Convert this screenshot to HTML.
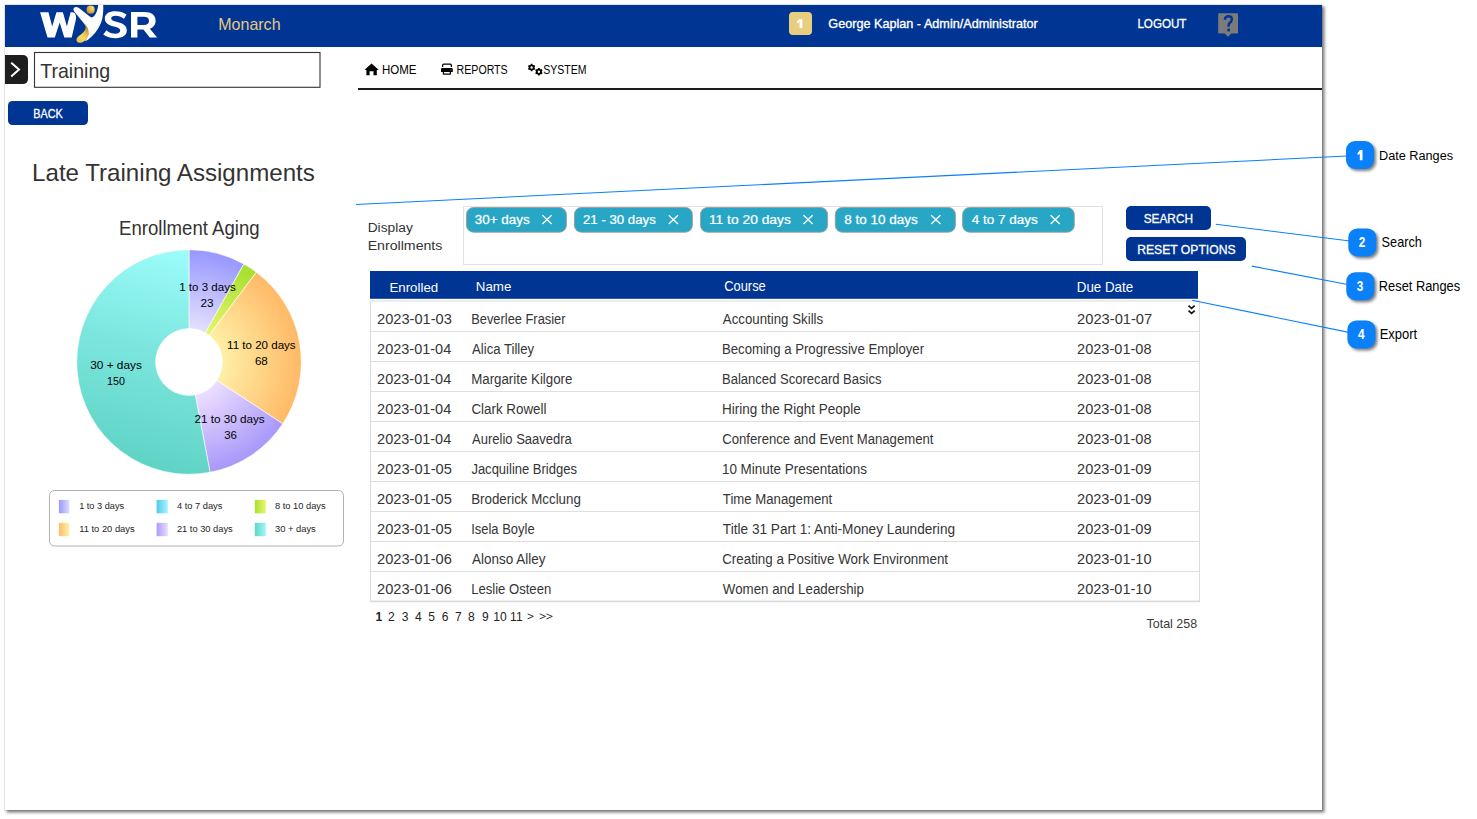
<!DOCTYPE html>
<html><head><meta charset="utf-8">
<style>
html,body{margin:0;padding:0;width:1477px;height:819px;overflow:hidden;background:#fff;}
svg{position:absolute;left:0;top:0;}
text{font-family:"Liberation Sans",sans-serif;}
</style></head><body>
<svg width="1477" height="819" viewBox="0 0 1477 819">
 <defs>
  <filter id="sh" x="-5%" y="-5%" width="110%" height="110%"><feGaussianBlur stdDeviation="1.6"/></filter>
  <filter id="bsh" x="-30%" y="-30%" width="160%" height="160%"><feGaussianBlur stdDeviation="1.4"/></filter>
  <radialGradient id="ga" gradientUnits="userSpaceOnUse" cx="189" cy="362" r="112.3"><stop offset="0.3" stop-color="#e4e0ff"/><stop offset="1" stop-color="#9797ff"/></radialGradient>
  <radialGradient id="gg" gradientUnits="userSpaceOnUse" cx="189" cy="362" r="112.3"><stop offset="0.3" stop-color="#e6f66e"/><stop offset="1" stop-color="#a6de2e"/></radialGradient>
  <radialGradient id="go" gradientUnits="userSpaceOnUse" cx="189" cy="362" r="112.3"><stop offset="0.3" stop-color="#ffefa6"/><stop offset="1" stop-color="#ffb966"/></radialGradient>
  <radialGradient id="gp" gradientUnits="userSpaceOnUse" cx="189" cy="362" r="112.3"><stop offset="0.3" stop-color="#ecdeff"/><stop offset="1" stop-color="#a898fa"/></radialGradient>
  <linearGradient id="gt" gradientUnits="userSpaceOnUse" x1="185" y1="252" x2="130" y2="470"><stop offset="0" stop-color="#9cfcfa"/><stop offset="0.45" stop-color="#7ce6de"/><stop offset="1" stop-color="#5ed2c4"/></linearGradient>
  <linearGradient id="l1" x1="0" y1="0" x2="1" y2="0"><stop offset="0" stop-color="#9b98ff"/><stop offset="1" stop-color="#dcdaff"/></linearGradient>
  <linearGradient id="l2" x1="0" y1="0" x2="1" y2="0"><stop offset="0" stop-color="#52c8e6"/><stop offset="1" stop-color="#a8f4ff"/></linearGradient>
  <linearGradient id="l3" x1="0" y1="0" x2="1" y2="0"><stop offset="0" stop-color="#acde2c"/><stop offset="1" stop-color="#e4f870"/></linearGradient>
  <linearGradient id="l4" x1="0" y1="0" x2="1" y2="0"><stop offset="0" stop-color="#ffbb68"/><stop offset="1" stop-color="#fff2a8"/></linearGradient>
  <linearGradient id="l5" x1="0" y1="0" x2="1" y2="0"><stop offset="0" stop-color="#ab9df9"/><stop offset="1" stop-color="#ebdcff"/></linearGradient>
  <linearGradient id="l6" x1="0" y1="0" x2="1" y2="0"><stop offset="0" stop-color="#5fd6c8"/><stop offset="1" stop-color="#a0f8f4"/></linearGradient>
  <linearGradient id="gold" x1="0.8" y1="0" x2="0.2" y2="1"><stop offset="0" stop-color="#a87018"/><stop offset="0.45" stop-color="#e8c050"/><stop offset="0.7" stop-color="#f2dc6c"/><stop offset="1" stop-color="#f0bc38"/></linearGradient>
  <radialGradient id="head" cx="0.7" cy="0.3" r="0.8"><stop offset="0" stop-color="#f6e27a"/><stop offset="0.6" stop-color="#dcae44"/><stop offset="1" stop-color="#c28a28"/></radialGradient>
 </defs>
 <!-- page shadow -->
 <rect x="6.5" y="6.5" width="1318" height="806" fill="#000" opacity="0.5" filter="url(#sh)"/>
 <rect x="4.5" y="4.5" width="1318" height="806" fill="none" stroke="#000" stroke-opacity="0.06" stroke-width="1"/>
 <rect x="5" y="5" width="1317" height="805" fill="#fff"/>
 <!-- header -->
 <rect x="5" y="5" width="1317" height="42" fill="#003594"/>
 <!-- logo -->
 <g fill="#fff">
  <path d="M40.1 12.3 L48.5 12.3 L52.2 26.5 L56.4 12.3 L62.9 12.3 L66.9 26.5 L70.6 12.3 L72.8 12.3 C75.2 12.6 76.6 15.4 75.9 19.6 L71.7 37.4 L64.3 37.4 L59.7 22.6 L54.8 37.4 L47.5 37.4 Z"/>
  <path d="M98.2 5 C97.6 9.5 96.6 13.5 94.0 16.2 C93.0 17.2 91.8 17.8 90.4 17.1 L78.6 7.8 C77.0 6.6 74.8 6.6 73.9 8.0 C73.2 9.2 73.4 10.4 74.2 11.4 L82.4 21.4 C84.6 23.8 86.6 27.0 87.6 30.6 C88.4 34.0 87.6 38.0 85.0 41.6 C93.0 37.0 99.6 29.0 102.2 19.0 C103.2 14.6 103.4 9.6 103.2 5Z"/>
  <path d="M106.5 30.3 C108.8 32.8 112.4 33.8 115.4 33.8 C118.4 33.8 120.2 32.6 120.2 30.6 C120.2 28.6 118.4 27.8 114.0 26.6 C108.0 25.0 104.8 22.6 104.8 18.4 C104.8 13.8 109.0 11.2 115.4 11.2 C119.8 11.2 123.6 12.4 126.6 14.6 L124.0 18.8 C121.4 16.8 118.4 15.8 115.6 15.8 C112.8 15.8 111.2 16.8 111.2 18.4 C111.2 20.2 113.2 21.0 117.4 22.0 C123.8 23.6 126.8 26.0 126.8 30.6 C126.8 35.4 122.6 38.2 115.8 38.2 C110.6 38.2 106.2 36.8 103.2 34.4Z"/>
  <path d="M131.0 12.0 H144.2 C151.6 12.0 155.6 15.2 155.6 20.8 C155.6 24.8 153.4 27.6 149.8 28.8 L157.2 37.6 H149.8 L143.4 29.6 H137.4 V37.6 H131.0Z M137.4 16.8 V25.0 H143.8 C147.2 25.0 149.0 23.6 149.0 20.9 C149.0 18.2 147.2 16.8 143.8 16.8Z" fill-rule="evenodd"/>
 </g>
 <path d="M83.4 22.6 C86.6 25.2 88.8 29.0 88.8 33.0 C88.8 37.0 86.0 40.6 82.4 42.2 C80.2 43.2 77.8 42.8 76.8 41.2 C75.8 39.6 76.8 37.6 78.8 36.0 C81.4 34.0 84.6 31.6 85.6 28.4 C86.0 26.6 85.0 24.4 83.4 22.6Z" fill="url(#gold)"/>
 <circle cx="90.6" cy="9.7" r="4.1" fill="url(#head)"/>
 <!-- badge 1 -->
 <rect x="789" y="12" width="23" height="23" rx="4" ry="4" fill="#e8cf80"/>
 <!-- help -->
 <path d="M1219.4 13.2 H1236.8 Q1238 13.2 1238 14.4 V32.4 Q1238 33.6 1236.8 33.6 H1231.2 L1228 36.8 L1224.8 33.6 H1219.4 Q1218.2 33.6 1218.2 32.4 V14.4 Q1218.2 13.2 1219.4 13.2Z" fill="#7b7b7b"/>
 <path d="M1224.9 19.8 C1224.9 17.4 1226.4 16.3 1228.4 16.3 C1230.5 16.3 1231.9 17.6 1231.9 19.3 C1231.9 21.0 1230.9 21.9 1229.8 22.8 C1228.9 23.5 1228.6 24.3 1228.6 25.6 V26.8" fill="none" stroke="#003594" stroke-width="2.4"/>
 <rect x="1227.3" y="28.6" width="2.7" height="2.8" fill="#003594"/>
 <!-- nav icons -->
 <path d="M371.6 63.6 L378.6 69.8 L376.8 69.9 V75.2 H373.5 V71.3 H369.6 V75.2 H366.4 V69.9 L364.6 69.8Z" fill="#000"/>
 <path d="M442.6 67.0 V65.4 Q442.6 64.2 443.8 64.2 H450.2 Q451.4 64.2 451.4 65.4 V67.0" fill="none" stroke="#000" stroke-width="1.3"/>
 <path d="M442.2 68.0 H451.6 Q452.8 68.0 452.8 69.2 V71.9 H451.0 V74.0 Q451.0 74.8 450.2 74.8 H443.6 Q442.8 74.8 442.8 74.0 V71.9 H441.0 V69.2 Q441.0 68.0 442.2 68.0Z M444.0 71.9 V73.6 H449.8 V71.9Z" fill="#000" fill-rule="evenodd"/>
 <circle cx="451.0" cy="69.9" r="0.5" fill="#8ab"/>
 <path d="M530.66 64.65 L530.85 63.78 L532.35 63.78 L532.54 64.65 L533.59 65.26 L534.45 64.98 L535.20 66.29 L534.54 66.89 L534.54 68.11 L535.20 68.71 L534.45 70.02 L533.59 69.74 L532.54 70.35 L532.35 71.22 L530.85 71.22 L530.66 70.35 L529.61 69.74 L528.75 70.02 L528.00 68.71 L528.66 68.11 L528.66 66.89 L528.00 66.29 L528.75 64.98 L529.61 65.26Z M530.40 67.50 a1.20 1.20 0 1 0 2.40 0 a1.20 1.20 0 1 0 -2.40 0Z" fill="#000" fill-rule="evenodd"/>
 <path d="M537.92 68.76 L538.13 67.88 L539.67 67.88 L539.88 68.76 L540.96 69.38 L541.82 69.12 L542.60 70.46 L541.94 71.07 L541.94 72.33 L542.60 72.94 L541.82 74.28 L540.96 74.02 L539.88 74.64 L539.67 75.52 L538.13 75.52 L537.92 74.64 L536.84 74.02 L535.98 74.28 L535.20 72.94 L535.86 72.33 L535.86 71.07 L535.20 70.46 L535.98 69.12 L536.84 69.38Z M537.70 71.70 a1.20 1.20 0 1 0 2.40 0 a1.20 1.20 0 1 0 -2.40 0Z" fill="#000" fill-rule="evenodd"/>
 <rect x="358" y="88" width="964" height="2" fill="#1c1c1c"/>
 <!-- left -->
 <path d="M5 55 H22.5 Q28 55 28 60.5 V78.5 Q28 84 22.5 84 H5Z" fill="#1e1e1e"/>
 <path d="M11.2 62.8 L19.0 69.6 L11.2 76.4" fill="none" stroke="#fff" stroke-width="2.0"/>
 <rect x="34.5" y="52.5" width="285.5" height="34.8" fill="none" stroke="#333" stroke-width="1.1"/>
 <rect x="8" y="101" width="80" height="24" rx="4.5" ry="4.5" fill="#003594"/>
 <!-- pie -->
 <g stroke="#fff" stroke-width="0.7" stroke-opacity="0.9">
<path fill="url(#ga)" d="M189.00 249.70 A112.3 112.3 0 0 1 243.89 264.03 L205.32 332.86 A33.4 33.4 0 0 0 189.00 328.60 Z"/>
<path fill="url(#gg)" d="M243.89 264.03 A112.3 112.3 0 0 1 256.41 272.18 L209.05 335.29 A33.4 33.4 0 0 0 205.32 332.86 Z"/>
<path fill="url(#go)" d="M256.41 272.18 A112.3 112.3 0 0 1 282.76 423.81 L216.89 380.38 A33.4 33.4 0 0 0 209.05 335.29 Z"/>
<path fill="url(#gp)" d="M282.76 423.81 A112.3 112.3 0 0 1 210.07 472.31 L195.27 394.81 A33.4 33.4 0 0 0 216.89 380.38 Z"/>
<path fill="url(#gt)" d="M210.07 472.31 A112.3 112.3 0 1 1 189.00 249.70 L189.00 328.60 A33.4 33.4 0 1 0 195.27 394.81 Z"/>
 </g>
 <rect x="49.5" y="490.5" width="294" height="55.5" rx="5" ry="5" fill="none" stroke="#b0b0b0" stroke-width="1"/>
 <rect x="58.9" y="499.9" width="10.4" height="13.4" fill="url(#l1)"/>
 <rect x="156.6" y="499.9" width="11.2" height="13.4" fill="url(#l2)"/>
 <rect x="254.8" y="499.9" width="11" height="13.4" fill="url(#l3)"/>
 <rect x="58.9" y="522.8" width="10.4" height="13.4" fill="url(#l4)"/>
 <rect x="156.6" y="522.8" width="11.2" height="13.4" fill="url(#l5)"/>
 <rect x="254.8" y="522.8" width="11" height="13.4" fill="url(#l6)"/>
 <!-- filters -->
 <rect x="463.5" y="206.5" width="639" height="58" fill="none" stroke="#e2e2e2" stroke-width="1"/>
<rect x="466.5" y="207.5" width="99.9" height="24.7" rx="7" ry="7" fill="#27a6c5" stroke="#a49a98" stroke-width="0.9"/>
<path d="M542.40 215.2 L551.60 224.0 M551.60 215.2 L542.40 224.0" stroke="#fff" stroke-width="1.3"/>
<rect x="574.4" y="207.5" width="118.0" height="24.7" rx="7" ry="7" fill="#27a6c5" stroke="#a49a98" stroke-width="0.9"/>
<path d="M668.80 215.2 L678.00 224.0 M678.00 215.2 L668.80 224.0" stroke="#fff" stroke-width="1.3"/>
<rect x="700.5" y="207.5" width="127.1" height="24.7" rx="7" ry="7" fill="#27a6c5" stroke="#a49a98" stroke-width="0.9"/>
<path d="M803.50 215.2 L812.70 224.0 M812.70 215.2 L803.50 224.0" stroke="#fff" stroke-width="1.3"/>
<rect x="835.3" y="207.5" width="120.1" height="24.7" rx="7" ry="7" fill="#27a6c5" stroke="#a49a98" stroke-width="0.9"/>
<path d="M931.20 215.2 L940.40 224.0 M940.40 215.2 L931.20 224.0" stroke="#fff" stroke-width="1.3"/>
<rect x="962.6" y="207.5" width="111.7" height="24.7" rx="7" ry="7" fill="#27a6c5" stroke="#a49a98" stroke-width="0.9"/>
<path d="M1050.60 215.2 L1059.80 224.0 M1059.80 215.2 L1050.60 224.0" stroke="#fff" stroke-width="1.3"/>

 <rect x="1126" y="206" width="85" height="24" rx="5" ry="5" fill="#003594"/>
 <rect x="1126" y="237" width="120" height="24" rx="5" ry="5" fill="#003594"/>
 <!-- table -->
 <rect x="370" y="271" width="828" height="27.8" fill="#003594"/>
 <rect x="370.5" y="301" width="829" height="300.5" fill="none" stroke="#dcdcdc" stroke-width="1"/>
 <rect x="370" y="600.6" width="830" height="1.6" fill="#d8d8d8"/>
<rect x="370.5" y="331.0" width="829" height="1" fill="#dedede"/>
<rect x="370.5" y="361.0" width="829" height="1" fill="#dedede"/>
<rect x="370.5" y="391.0" width="829" height="1" fill="#dedede"/>
<rect x="370.5" y="421.0" width="829" height="1" fill="#dedede"/>
<rect x="370.5" y="451.0" width="829" height="1" fill="#dedede"/>
<rect x="370.5" y="481.0" width="829" height="1" fill="#dedede"/>
<rect x="370.5" y="511.0" width="829" height="1" fill="#dedede"/>
<rect x="370.5" y="541.0" width="829" height="1" fill="#dedede"/>
<rect x="370.5" y="571.0" width="829" height="1" fill="#dedede"/>

 <path d="M1188.5 305.6 L1191.6 308.4 L1194.7 305.6 M1188.5 310.6 L1191.6 313.4 L1194.7 310.6" fill="none" stroke="#111" stroke-width="1.6"/>
 <!-- callout lines -->
 <g stroke="#0a7ffc" stroke-width="1.1" fill="none">
  <path d="M356 204.5 L1352 155.8"/>
  <path d="M1215.9 224.2 L1356 241.8"/>
  <path d="M1251.8 266.1 L1354 285.8"/>
  <path d="M1192 300.3 L1355 333.6"/>
 </g>
 <!-- badges -->
 <g>
  <rect x="1348" y="143" width="28" height="28" rx="9" ry="9" fill="#000" opacity="0.5" filter="url(#bsh)"/>
  <rect x="1350.3" y="230.4" width="28" height="28" rx="9" ry="9" fill="#000" opacity="0.5" filter="url(#bsh)"/>
  <rect x="1348.3" y="274.2" width="28" height="28" rx="9" ry="9" fill="#000" opacity="0.5" filter="url(#bsh)"/>
  <rect x="1349.4" y="322.4" width="28" height="28" rx="9" ry="9" fill="#000" opacity="0.5" filter="url(#bsh)"/>
  <rect x="1346" y="141" width="28" height="28" rx="9" ry="9" fill="#0a80fb"/>
  <rect x="1348.3" y="228.4" width="28" height="28" rx="9" ry="9" fill="#0a80fb"/>
  <rect x="1346.3" y="272.2" width="28" height="28" rx="9" ry="9" fill="#0a80fb"/>
  <rect x="1347.4" y="320.4" width="28" height="28" rx="9" ry="9" fill="#0a80fb"/>
 </g>
 <path d="M799.6 18.9 H802.3 V28.0 H799.6 V22.3 L797.3 23.5 L796.8 21.5Z" fill="#fff"/>
 <path d="M1359.8 150.1 H1362.5 V160.2 H1359.8 V153.7 Q1358.8 154.5 1357.6 154.9 V152.7 Q1359.3 151.9 1359.8 150.1Z" fill="#fff"/>
 <path d="M527.6 613.9 L533.4 616.4 L527.6 618.9 M539.7 613.9 L545.5 616.4 L539.7 618.9 M546.5 613.9 L552.3 616.4 L546.5 618.9" fill="none" stroke="#2a2a2a" stroke-width="0.95"/>
 <!-- texts -->
<text transform="translate(218.21 30.00) scale(1.0106 1)" font-size="15.86" fill="#e6c97c">Monarch</text>
<text transform="translate(828.31 27.90) scale(0.9834 1)" font-size="12.86" fill="#ffffff" stroke="#ffffff" stroke-width="0.35">George Kaplan - Admin/Administrator</text>
<text transform="translate(1137.40 27.80) scale(0.9149 1)" font-size="12.71" fill="#ffffff" stroke="#ffffff" stroke-width="0.30">LOGOUT</text>
<text transform="translate(382.05 73.90) scale(0.8850 1)" font-size="13.00" fill="#000">HOME</text>
<text transform="translate(456.55 73.80) scale(0.8361 1)" font-size="12.71" fill="#000">REPORTS</text>
<text transform="translate(543.20 73.80) scale(0.8267 1)" font-size="12.71" fill="#000">SYSTEM</text>
<text transform="translate(40.15 78.00) scale(0.9802 1)" font-size="20.00" fill="#333">Training</text>
<text transform="translate(33.27 117.80) scale(0.8935 1)" font-size="12.14" fill="#fff" stroke="#fff" stroke-width="0.30">BACK</text>
<text transform="translate(32.06 181.00) scale(1.0052 1)" font-size="24.00" fill="#333">Late Training Assignments</text>
<text transform="translate(119.06 235.00) scale(0.9434 1)" font-size="19.71" fill="#333">Enrollment Aging</text>
<text transform="translate(179.20 290.60) scale(0.9878 1)" font-size="11.71" fill="#000">1 to 3 days</text>
<text x="200.50" y="306.50" font-size="11.71" fill="#000">23</text>
<text transform="translate(227.10 348.60) scale(0.9878 1)" font-size="11.71" fill="#000">11 to 20 days</text>
<text transform="translate(254.90 364.70) scale(0.9913 1)" font-size="11.71" fill="#000">68</text>
<text transform="translate(90.20 369.00) scale(1.0112 1)" font-size="11.71" fill="#000">30 + days</text>
<text transform="translate(107.10 384.50) scale(0.9142 1)" font-size="11.71" fill="#000">150</text>
<text x="194.40" y="423.10" font-size="11.71" fill="#000">21 to 30 days</text>
<text transform="translate(224.20 438.70) scale(0.9753 1)" font-size="11.71" fill="#000">36</text>
<text transform="translate(79.15 508.80) scale(0.9751 1)" font-size="9.43" fill="#1e1e1e">1 to 3 days</text>
<text transform="translate(176.90 508.80) scale(0.9862 1)" font-size="9.43" fill="#1e1e1e">4 to 7 days</text>
<text transform="translate(275.00 508.80) scale(0.9850 1)" font-size="9.43" fill="#1e1e1e">8 to 10 days</text>
<text transform="translate(79.15 531.60) scale(0.9947 1)" font-size="9.43" fill="#1e1e1e">11 to 20 days</text>
<text transform="translate(176.90 531.60) scale(0.9862 1)" font-size="9.43" fill="#1e1e1e">21 to 30 days</text>
<text transform="translate(275.00 531.60) scale(0.9899 1)" font-size="9.43" fill="#1e1e1e">30 + days</text>
<text transform="translate(367.70 231.90) scale(1.0703 1)" font-size="12.86" fill="#333">Display</text>
<text transform="translate(367.68 250.00) scale(1.0896 1)" font-size="13.00" fill="#333">Enrollments</text>
<text transform="translate(474.84 223.70) scale(1.0122 1)" font-size="13.29" fill="#fff" stroke="#fff" stroke-width="0.25">30+ days</text>
<text transform="translate(583.00 223.70) scale(0.9960 1)" font-size="13.29" fill="#fff" stroke="#fff" stroke-width="0.25">21 - 30 days</text>
<text transform="translate(708.96 223.70) scale(1.0390 1)" font-size="13.29" fill="#fff" stroke="#fff" stroke-width="0.25">11 to 20 days</text>
<text transform="translate(844.15 223.70) scale(1.0166 1)" font-size="13.29" fill="#fff" stroke="#fff" stroke-width="0.25">8 to 10 days</text>
<text transform="translate(971.77 223.70) scale(1.0148 1)" font-size="13.29" fill="#fff" stroke="#fff" stroke-width="0.25">4 to 7 days</text>
<text transform="translate(1143.69 223.10) scale(0.9202 1)" font-size="12.86" fill="#fff" stroke="#fff" stroke-width="0.30">SEARCH</text>
<text transform="translate(1137.21 254.10) scale(0.9459 1)" font-size="12.86" fill="#fff" stroke="#fff" stroke-width="0.30">RESET OPTIONS</text>
<text transform="translate(389.43 291.80) scale(1.0339 1)" font-size="12.86" fill="#fff">Enrolled</text>
<text transform="translate(475.79 291.30) scale(0.9837 1)" font-size="13.57" fill="#fff">Name</text>
<text transform="translate(724.23 290.80) scale(0.9297 1)" font-size="13.86" fill="#fff">Course</text>
<text transform="translate(1076.82 291.90) scale(0.9517 1)" font-size="14.00" fill="#fff">Due Date</text>
<text transform="translate(377.07 324.00) scale(1.0149 1)" font-size="14.43" fill="#353535">2023-01-03</text>
<text transform="translate(471.19 324.00) scale(0.8925 1)" font-size="14.43" fill="#353535">Beverlee Frasier</text>
<text transform="translate(722.85 324.00) scale(0.9199 1)" font-size="14.43" fill="#353535">Accounting Skills</text>
<text transform="translate(1077.07 324.00) scale(1.0191 1)" font-size="14.43" fill="#353535">2023-01-07</text>
<text transform="translate(377.07 354.00) scale(1.0054 1)" font-size="14.43" fill="#353535">2023-01-04</text>
<text transform="translate(472.08 354.00) scale(0.9116 1)" font-size="14.43" fill="#353535">Alica Tilley</text>
<text transform="translate(721.94 354.00) scale(0.9135 1)" font-size="14.43" fill="#353535">Becoming a Progressive Employer</text>
<text transform="translate(1077.07 354.00) scale(1.0096 1)" font-size="14.43" fill="#353535">2023-01-08</text>
<text transform="translate(377.07 384.00) scale(1.0054 1)" font-size="14.43" fill="#353535">2023-01-04</text>
<text transform="translate(471.16 384.00) scale(0.9222 1)" font-size="14.43" fill="#353535">Margarite Kilgore</text>
<text transform="translate(721.94 384.00) scale(0.9057 1)" font-size="14.43" fill="#353535">Balanced Scorecard Basics</text>
<text transform="translate(1077.07 384.00) scale(1.0096 1)" font-size="14.43" fill="#353535">2023-01-08</text>
<text transform="translate(377.07 414.00) scale(1.0054 1)" font-size="14.43" fill="#353535">2023-01-04</text>
<text transform="translate(471.38 414.00) scale(0.9272 1)" font-size="14.43" fill="#353535">Clark Rowell</text>
<text transform="translate(721.91 414.00) scale(0.9363 1)" font-size="14.43" fill="#353535">Hiring the Right People</text>
<text transform="translate(1077.07 414.00) scale(1.0096 1)" font-size="14.43" fill="#353535">2023-01-08</text>
<text transform="translate(377.07 444.00) scale(1.0054 1)" font-size="14.43" fill="#353535">2023-01-04</text>
<text transform="translate(472.08 444.00) scale(0.9017 1)" font-size="14.43" fill="#353535">Aurelio Saavedra</text>
<text transform="translate(722.15 444.00) scale(0.9126 1)" font-size="14.43" fill="#353535">Conference and Event Management</text>
<text transform="translate(1077.07 444.00) scale(1.0096 1)" font-size="14.43" fill="#353535">2023-01-08</text>
<text transform="translate(377.07 474.00) scale(1.0149 1)" font-size="14.43" fill="#353535">2023-01-05</text>
<text transform="translate(471.38 474.00) scale(0.9023 1)" font-size="14.43" fill="#353535">Jacquiline Bridges</text>
<text transform="translate(721.92 474.00) scale(0.9331 1)" font-size="14.43" fill="#353535">10 Minute Presentations</text>
<text transform="translate(1077.07 474.00) scale(1.0096 1)" font-size="14.43" fill="#353535">2023-01-09</text>
<text transform="translate(377.07 504.00) scale(1.0149 1)" font-size="14.43" fill="#353535">2023-01-05</text>
<text transform="translate(471.15 504.00) scale(0.9252 1)" font-size="14.43" fill="#353535">Broderick Mcclung</text>
<text transform="translate(722.85 504.00) scale(0.9135 1)" font-size="14.43" fill="#353535">Time Management</text>
<text transform="translate(1077.07 504.00) scale(1.0096 1)" font-size="14.43" fill="#353535">2023-01-09</text>
<text transform="translate(377.07 534.00) scale(1.0149 1)" font-size="14.43" fill="#353535">2023-01-05</text>
<text transform="translate(471.18 534.00) scale(0.8993 1)" font-size="14.43" fill="#353535">Isela Boyle</text>
<text transform="translate(722.85 534.00) scale(0.9459 1)" font-size="14.43" fill="#353535">Title 31 Part 1: Anti-Money Laundering</text>
<text transform="translate(1077.07 534.00) scale(1.0096 1)" font-size="14.43" fill="#353535">2023-01-09</text>
<text transform="translate(377.07 564.00) scale(1.0149 1)" font-size="14.43" fill="#353535">2023-01-06</text>
<text transform="translate(472.08 564.00) scale(0.9339 1)" font-size="14.43" fill="#353535">Alonso Alley</text>
<text transform="translate(722.15 564.00) scale(0.9289 1)" font-size="14.43" fill="#353535">Creating a Positive Work Environment</text>
<text transform="translate(1077.07 564.00) scale(1.0096 1)" font-size="14.43" fill="#353535">2023-01-10</text>
<text transform="translate(377.07 594.00) scale(1.0149 1)" font-size="14.43" fill="#353535">2023-01-06</text>
<text transform="translate(471.17 594.00) scale(0.9081 1)" font-size="14.43" fill="#353535">Leslie Osteen</text>
<text transform="translate(722.85 594.00) scale(0.9234 1)" font-size="14.43" fill="#353535">Women and Leadership</text>
<text transform="translate(1077.07 594.00) scale(1.0096 1)" font-size="14.43" fill="#353535">2023-01-10</text>
<text transform="translate(375.40 621.00) scale(0.9200 1)" font-size="13.14" fill="#222" font-weight="bold">1</text>
<text transform="translate(387.90 621.00) scale(0.9200 1)" font-size="13.14" fill="#222">2</text>
<text transform="translate(401.80 621.00) scale(0.9200 1)" font-size="13.14" fill="#222">3</text>
<text transform="translate(415.00 621.00) scale(0.9200 1)" font-size="13.14" fill="#222">4</text>
<text transform="translate(428.20 621.00) scale(0.9200 1)" font-size="13.14" fill="#222">5</text>
<text transform="translate(441.80 621.00) scale(0.9200 1)" font-size="13.14" fill="#222">6</text>
<text transform="translate(455.00 621.00) scale(0.9200 1)" font-size="13.14" fill="#222">7</text>
<text transform="translate(468.00 621.00) scale(0.9200 1)" font-size="13.14" fill="#222">8</text>
<text transform="translate(481.90 621.00) scale(0.9200 1)" font-size="13.14" fill="#222">9</text>
<text transform="translate(493.18 621.00) scale(0.9200 1)" font-size="13.14" fill="#222">10</text>
<text transform="translate(510.08 621.00) scale(0.9200 1)" font-size="13.14" fill="#222">11</text>
<text transform="translate(1146.62 627.80) scale(0.9894 1)" font-size="12.57" fill="#3a3a3a">Total 258</text>
<text transform="translate(1379.00 159.80) scale(0.9264 1)" font-size="13.71" fill="#000">Date Ranges</text>
<text transform="translate(1381.60 246.80) scale(0.9088 1)" font-size="14.00" fill="#000">Search</text>
<text transform="translate(1378.84 291.00) scale(0.9073 1)" font-size="14.14" fill="#000">Reset Ranges</text>
<text transform="translate(1379.65 338.80) scale(0.9485 1)" font-size="13.71" fill="#000">Export</text>
<text transform="translate(1358.86 247.40) scale(0.8600 1)" font-size="13.71" fill="#fff" font-weight="bold">2</text>
<text transform="translate(1356.86 291.20) scale(0.8600 1)" font-size="13.71" fill="#fff" font-weight="bold">3</text>
<text transform="translate(1357.96 339.40) scale(0.8600 1)" font-size="13.71" fill="#fff" font-weight="bold">4</text>
</svg>
</body></html>
